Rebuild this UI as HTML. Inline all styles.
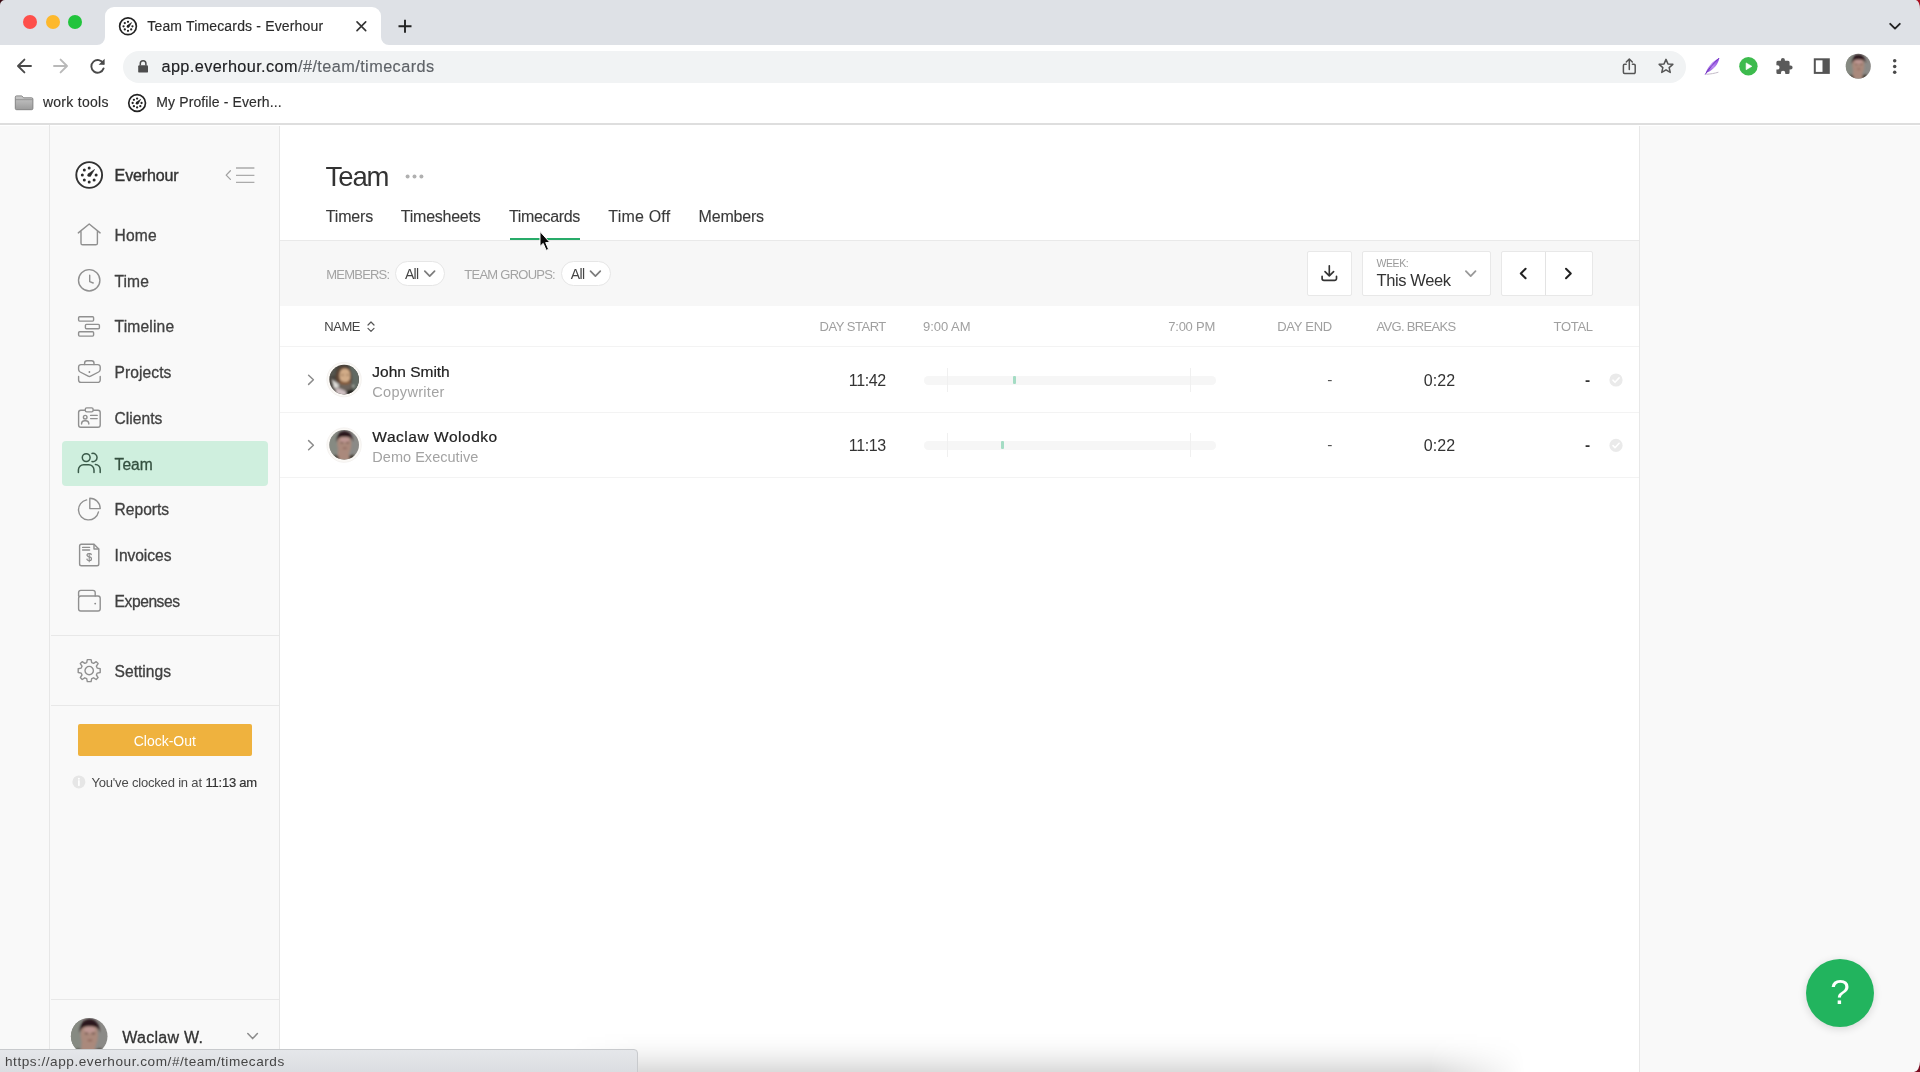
<!DOCTYPE html>
<html lang="en"><head><meta charset="utf-8"><title>Team Timecards - Everhour</title>
<style>
*{box-sizing:border-box;margin:0;padding:0}
html,body{width:1920px;height:1072px;overflow:hidden;background:#fff}
body{font-family:"Liberation Sans",sans-serif;color:#333;position:relative}
.a{position:absolute}
.t{position:absolute;white-space:pre;line-height:1}
svg{position:absolute;overflow:visible}
.ic{fill:none;stroke:#909090;stroke-width:1.4;stroke-linecap:round;stroke-linejoin:round}
#tabbar{left:0;top:0;width:1920px;height:45px;background:#dee1e6}
#tab{left:105px;top:7px;width:276px;height:38px;background:#fff;border-radius:9px 9px 0 0}
#toolbar{left:0;top:45px;width:1920px;height:79px;background:#fff}
#tbline{left:0;top:123px;width:1920px;height:2px;background:#dedede}
#pill{left:123px;top:51px;width:1563px;height:32px;border-radius:16px;background:#f1f3f4}
.dot{position:absolute;width:14px;height:14px;border-radius:50%;top:15px}
#gutl{left:0;top:126px;width:50px;height:946px;background:#f9f9f9}
#side{left:50px;top:126px;width:230px;height:946px;background:#f9f9f9;border-right:1px solid #e6e6e6}
#sidel{left:49.3px;top:125px;width:1px;height:947px;background:#e7e7e7}
#gutr{left:1639px;top:126px;width:281px;height:946px;background:#f9f9f9;border-left:1px solid #e8e8e8}
.hr{position:absolute;height:1px;background:#e8e8e8}
#active{left:62px;top:440.5px;width:206px;height:45.5px;background:#cfefde;border-radius:4px}
#clock{left:78px;top:724px;width:173.5px;height:32px;background:#efb23e;border-radius:2px}
#filter{left:280px;top:241px;width:1359px;height:64.5px;background:#f7f7f7}
.pillf{position:absolute;top:261px;height:25px;background:#fff;border:1px solid #e6e6e6;border-radius:12.5px}
.btn{position:absolute;top:251px;height:45px;background:#fff;border:1px solid #e8e8e8;border-radius:2px}
.bar{position:absolute;left:923.5px;width:292px;height:8.5px;background:#f6f6f6;border-radius:4.25px}
.tick{position:absolute;width:1px;height:24px;background:#f0f0f0}
.mark{position:absolute;width:3px;height:8px;background:#a4dcc4;border-radius:1px}
#status{left:-1px;top:1049px;width:639px;height:24px;background:linear-gradient(to bottom,#e5e7ea,#dbdde1);border:1px solid #c8cacd;border-radius:0 4px 0 0}
#shade{left:570px;top:1032px;width:960px;height:40px;background:linear-gradient(to bottom,rgba(0,0,0,0) 0,rgba(0,0,0,.012) 25%,rgba(0,0,0,.04) 50%,rgba(0,0,0,.085) 75%,rgba(0,0,0,.145) 100%);-webkit-mask-image:linear-gradient(to right,transparent 0,#000 70px,#000 860px,transparent 955px);mask-image:linear-gradient(to right,transparent 0,#000 70px,#000 860px,transparent 955px)}
#help{left:1806px;top:959px;width:68px;height:68px;border-radius:50%;background:#22b45e;box-shadow:0 2px 8px rgba(0,0,0,.14)}
</style></head><body>
<svg width="2" height="2" style="left:-10px;top:-10px"><defs>
<filter id="bl" x="-20%" y="-20%" width="140%" height="140%"><feGaussianBlur stdDeviation="1"/></filter>
<clipPath id="c15"><circle r="14.8"/></clipPath>
<g id="evl"><circle r="12.9" fill="#fff" stroke="#333" stroke-width="1.9"/><g fill="#2b2b2b"><circle cx="0" cy="-6.9" r="1.5"/><circle cx="-4.9" cy="-4.9" r="1.5"/><circle cx="-6.9" cy="0" r="1.5"/><circle cx="-4.9" cy="4.9" r="1.5"/><circle cx="0" cy="6.9" r="1.5"/><circle cx="4.9" cy="4.9" r="1.5"/><circle cx="6.9" cy="0" r="1.5"/><circle cx="-.1" cy=".2" r="1.65"/><path d="M-1.35 -.75 L5.3 -5.5 L1.2 1.35Z" stroke="#2b2b2b" stroke-width=".7" stroke-linejoin="round"/></g></g>
<g id="evs"><circle r="12.6" fill="#fff" stroke="#222" stroke-width="2.5"/><g fill="#222"><circle cx="0" cy="-6.7" r="1.7"/><circle cx="-4.8" cy="-4.8" r="1.7"/><circle cx="-6.7" cy="0" r="1.7"/><circle cx="-4.8" cy="4.8" r="1.7"/><circle cx="0" cy="6.7" r="1.7"/><circle cx="4.8" cy="4.8" r="1.7"/><circle cx="6.7" cy="0" r="1.7"/><circle cx="-.1" cy=".2" r="1.9"/><path d="M-1.5 -.8 L5.4 -5.6 L1.3 1.5Z" stroke="#222" stroke-width=".9" stroke-linejoin="round"/></g></g>
<g id="wac"><g clip-path="url(#c15)"><rect x="-16" y="-16" width="32" height="32" fill="#8b8a87"/><g filter="url(#bl)"><rect x="-16" y="-16" width="9" height="32" fill="#868a82"/><path d="M-6.6 15 L-6 4 C-7.6 -2 -7.4 -10 0 -10.6 C7.4 -10 7.8 -2 6.6 3.5 L4.6 9.5 L5 15Z" fill="#aa897b"/><ellipse cx=".4" cy="-5.2" rx="4.6" ry="2.6" fill="#bd9692"/><path d="M-7.8 -2.4 C-9.4 -17.6 9.8 -17.6 8.4 -2.8 C7.4 -6.8 5.6 -8 .4 -8 C-4.6 -8 -6.6 -6.8 -7.8 -2.4Z" fill="#2c191d"/><path d="M-3.4 -2.2 H-1 M2 -2.2 H4.6" stroke="#6b4c44" stroke-width="1.1"/><path d="M-1.2 3.4 H2.4" stroke="#8a5d55" stroke-width="1.2"/><path d="M-12 15 L-9.5 9.5 L-5.6 11.6 L-5 15Z" fill="#47423d"/><path d="M4.8 15 L5 10.8 L9.4 9.6 L11.5 15Z" fill="#463f36"/></g></g></g>
<g id="jsm"><g clip-path="url(#c15)"><rect x="-16" y="-16" width="32" height="32" fill="#45413b"/><g filter="url(#bl)"><path d="M5 -16 H16 V12 L8 12 L7 -4Z" fill="#626a63"/><path d="M-16 -2 L-9 -4 L-8 -14 L-16 -14Z" fill="#56574f"/><path d="M-7.6 3.4 C-9.6 -6 -6.6 -13.6 0 -13.4 C6.8 -13.2 8.6 -5.4 7.2 3.2Z" fill="#604636"/><path d="M-4.4 -1 C-5.4 -7 -3.4 -11 .8 -11 C5 -11 6.8 -7 5.8 -.6 C5 3.4 -3.6 3.8 -4.4 -1Z" fill="#d2ac88"/><path d="M-2.8 -4.6 H-.4 M2.4 -4.6 H4.6" stroke="#7a5a3c" stroke-width="1.2"/><path d="M-5.2 2.4 C-3 4.4 5 4.4 7.2 2.2 L7.4 9.4 C4 11 -2 11 -5 9.4Z" fill="#6c645b"/><path d="M-4.4 1.4 C-2 3.4 4 3.2 6.4 1.2 L6 4 C3 5.4 -2 5.4 -4.6 4Z" fill="#8a5d3a"/><path d="M-12.6 -.8 L-5.4 4.6 L-5.6 8.4 L-10.4 9 Z" fill="#dcdad6"/><path d="M-9.4 9.4 L-5 8.6 L2.6 12 L2 16 L-7 16Z" fill="#cfc0c2"/><path d="M2.6 11.6 L9 10 L11 16 L2 16Z" fill="#23231f"/><circle cx="9" cy="6.4" r=".9" fill="#d8d8d0"/></g></g></g>
</defs></svg>

<!-- ================= BROWSER CHROME ================= -->
<div class="a" id="tabbar"></div>
<div class="a" id="tab"></div>
<svg style="left:97px;top:37px" width="8" height="8"><path d="M0 8 A8 8 0 0 0 8 0 V8Z" fill="#fff"/></svg>
<svg style="left:381px;top:37px" width="8" height="8"><path d="M8 8 A8 8 0 0 1 0 0 V8Z" fill="#fff"/></svg>
<div class="dot" style="left:23px;background:#fe4f4b"></div>
<div class="dot" style="left:45.5px;background:#fdb82c"></div>
<div class="dot" style="left:68.3px;background:#21c43c"></div>
<div class="a" id="toolbar"></div>
<div class="a" id="tbline"></div>
<div class="a" id="pill"></div>
<!--CHROMEICONS_START-->
<svg width="1920" height="125" style="left:0;top:0" viewBox="0 0 1920 125">
<defs>
<linearGradient id="fe" x1="0" y1="1" x2="1" y2="0"><stop offset="0" stop-color="#7a38c9"/><stop offset=".5" stop-color="#b98af0"/><stop offset="1" stop-color="#8a44dc"/></linearGradient>
<linearGradient id="fold" x1="0" y1="0" x2="0" y2="1"><stop offset="0" stop-color="#c9c9c9"/><stop offset="1" stop-color="#9b9b9b"/></linearGradient>
<radialGradient id="face" cx=".5" cy=".45" r=".5"><stop offset="0" stop-color="#c9a08f"/><stop offset=".55" stop-color="#b08878"/><stop offset="1" stop-color="#8d8a86"/></radialGradient>
<clipPath id="pc"><circle cx="1858.3" cy="66.2" r="12.5"/></clipPath>
</defs>
<!-- corners of window -->
<path d="M0 0 H5 A5 5 0 0 0 0 5Z" fill="#3a0a12"/><path d="M1915.8 0 A4.2 9.2 0 0 1 1920 9.2 V0Z" fill="#a80f20"/>
<!-- tab favicon / close / plus -->
<use href="#evs" transform="translate(128 26.3) scale(.665)"/>
<path d="M357 21.9 L365.7 30.6 M365.7 21.9 L357 30.6" stroke="#333" stroke-width="1.6" stroke-linecap="round"/>
<path d="M398.5 26.3 H411.5 M405 19.8 V32.8" stroke="#222" stroke-width="1.9" stroke-linecap="butt"/>
<path d="M1890.2 23.8 L1895 28.6 L1899.8 23.8" fill="none" stroke="#222" stroke-width="1.9" stroke-linecap="round" stroke-linejoin="round"/>
<!-- nav arrows -->
<path d="M31 66 H18.2 M24.4 59.6 L18 66 L24.4 72.4" fill="none" stroke="#4a4a4a" stroke-width="1.9" stroke-linecap="round" stroke-linejoin="round"/>
<path d="M54 66 H66.8 M60.6 59.6 L67 66 L60.6 72.4" fill="none" stroke="#b9b9b9" stroke-width="1.9" stroke-linecap="round" stroke-linejoin="round"/>
<path d="M103.3 63.6 A6.3 6.3 0 1 0 103.6 68.4" fill="none" stroke="#4a4a4a" stroke-width="1.9" stroke-linecap="round"/>
<path d="M104.6 58.8 V64.8 H98.6 Z" fill="#4a4a4a"/>
<!-- lock -->
<rect x="138.2" y="65.2" width="9.8" height="7.4" rx="1.2" fill="#4d4d4d"/>
<path d="M140.3 65.5 V63.6 A2.8 2.8 0 0 1 145.9 63.6 V65.5" fill="none" stroke="#4d4d4d" stroke-width="1.5"/>
<!-- share -->
<path d="M1626.2 64.3 H1624.6 A1.2 1.2 0 0 0 1623.4 65.5 V72.3 A1.2 1.2 0 0 0 1624.6 73.5 H1634 A1.2 1.2 0 0 0 1635.2 72.3 V65.5 A1.2 1.2 0 0 0 1634 64.3 H1632.4" fill="none" stroke="#555" stroke-width="1.5" stroke-linecap="round"/>
<path d="M1629.3 69.5 V59.3 M1626.3 62 L1629.3 59 L1632.3 62" fill="none" stroke="#555" stroke-width="1.5" stroke-linecap="round" stroke-linejoin="round"/>
<!-- star -->
<path d="M1666 59.4 L1667.95 63.9 L1672.85 64.35 L1669.15 67.6 L1670.25 72.4 L1666 69.85 L1661.75 72.4 L1662.85 67.6 L1659.15 64.35 L1664.05 63.9 Z" fill="none" stroke="#555" stroke-width="1.5" stroke-linejoin="round"/>
<!-- feather -->
<path d="M1705.4 74.2 C1706.8 68.4 1711.8 61.4 1719.2 58 C1718.6 63.6 1713.8 70 1706.8 72.6 Z" fill="url(#fe)"/>
<path d="M1705.2 74.6 C1708.2 69.6 1712.6 64.4 1719.2 58" fill="none" stroke="#6f2fc0" stroke-width=".9"/>
<path d="M1706.4 74.3 C1710 74.1 1714.6 73.4 1718.4 72.2" fill="none" stroke="#c4bcc9" stroke-width="1"/>
<!-- play -->
<circle cx="1748.4" cy="66.3" r="9.2" fill="#3dbb4d"/><path d="M1746.1 62.9 V69.7 L1751.9 66.3Z" fill="#fff" stroke="#fff" stroke-width=".6" stroke-linejoin="round"/>
<!-- puzzle -->
<path d="M1790.6 65.6 H1789.6 V62.2 A1.5 1.5 0 0 0 1788.1 60.7 H1784.9 V59.9 A2 2 0 0 0 1780.9 59.9 V60.7 H1777.9 A1.5 1.5 0 0 0 1776.4 62.2 V65.2 H1777.3 A2.2 2.2 0 0 1 1777.3 69.6 H1776.4 V72.4 A1.5 1.5 0 0 0 1777.9 73.9 H1780.9 V73 A2.2 2.2 0 0 1 1785.3 73 V73.9 H1788.1 A1.5 1.5 0 0 0 1789.6 72.4 V69.6 H1790.6 A2 2 0 0 0 1790.6 65.6Z" fill="#5a5a5a"/>
<!-- side panel -->
<rect x="1814.8" y="59.3" width="14" height="13.6" fill="none" stroke="#555" stroke-width="2"/><rect x="1822.5" y="59.3" width="6.3" height="13.6" fill="#555"/>
<!-- profile -->
<use href="#wac" transform="translate(1858.3 66.2) scale(.845)"/>
<!-- dots menu -->
<circle cx="1894.7" cy="60.8" r="1.75" fill="#4a4a4a"/><circle cx="1894.7" cy="66.5" r="1.75" fill="#4a4a4a"/><circle cx="1894.7" cy="72.2" r="1.75" fill="#4a4a4a"/>
<!-- bookmarks -->
<path d="M15.3 97.2 A1.3 1.3 0 0 1 16.6 95.9 H21.8 L23.6 97.8 H31.6 A1.3 1.3 0 0 1 32.9 99.1 V108.4 A1.3 1.3 0 0 1 31.6 109.7 H16.6 A1.3 1.3 0 0 1 15.3 108.4Z" fill="url(#fold)" stroke="#7d7d7d" stroke-width=".9"/>
<path d="M15.6 99.7 H32.6" stroke="#8a8a8a" stroke-width=".8"/>
<use href="#evs" transform="translate(137.1 103) scale(.665)"/>
</svg>
<!--CHROMEICONS_END-->
<!-- ================= APP ================= -->
<div class="a" id="gutl"></div>
<div class="a" id="side"></div>
<div class="a" id="sidel"></div>
<div class="a" id="gutr"></div>
<div class="a" id="active"></div>
<div class="hr" style="left:51px;top:635px;width:228px"></div>
<div class="hr" style="left:51px;top:705px;width:228px"></div>
<div class="hr" style="left:51px;top:999px;width:228px"></div>
<div class="a" id="clock"></div>
<!--SIDEICONS_START-->
<svg width="280" height="947" style="left:0;top:125px" viewBox="0 125 280 947">
<defs><clipPath id="uc"><circle cx="89.2" cy="1036.2" r="18.3"/></clipPath><filter id="b1"><feGaussianBlur stdDeviation="1.1"/></filter></defs>
<!-- logo -->
<use href="#evl" transform="translate(89.2 175)"/>
<!-- collapse -->
<path d="M230.4 170.8 L226.2 175.1 L230.4 179.4" fill="none" stroke="#a2a2a2" stroke-width="1.3" stroke-linecap="round" stroke-linejoin="round"/>
<path d="M236 168 H254.4 M236 175.3 H254.4 M236 182.4 H254.4" stroke="#ababab" stroke-width="1.3"/>
<!-- home -->
<path class="ic" d="M78.3 232.9 L89.2 224 L100.1 232.9 M81 231 V243.2 A1.6 1.6 0 0 0 82.6 244.8 H95.8 A1.6 1.6 0 0 0 97.4 243.2 V231"/>
<!-- time -->
<circle class="ic" cx="89.2" cy="280.3" r="10.7"/><path class="ic" d="M89.7 275.2 V281.6 L93.2 283"/>
<!-- timeline -->
<rect class="ic" x="78.6" y="316.8" width="15" height="4.3" rx="1"/><rect class="ic" x="85.4" y="324.4" width="14" height="4.3" rx="1"/><rect class="ic" x="78.6" y="331.8" width="15" height="4.3" rx="1"/>
<!-- projects -->
<path class="ic" d="M84.6 364.6 V363.2 A2.4 2.4 0 0 1 87 360.8 H91.6 A2.4 2.4 0 0 1 94 363.2 V364.6"/>
<path class="ic" d="M78.6 369.6 V367 A2.4 2.4 0 0 1 81 364.6 H97.8 A2.4 2.4 0 0 1 100.2 367 V369.6 C100.2 370.8 99.6 371.4 98.6 372 L90.6 376.2 C89.8 376.6 89 376.6 88.2 376.2 L80.2 372 C79.2 371.4 78.6 370.8 78.6 369.6Z"/>
<path class="ic" d="M78.6 376.4 V380 A2.4 2.4 0 0 0 81 382.4 H97.8 A2.4 2.4 0 0 0 100.2 380 V376.4"/>
<circle cx="89.4" cy="372" r=".9" fill="#8a8a8a"/>
<!-- clients -->
<rect class="ic" x="78.6" y="410.2" width="21.6" height="17" rx="2.2"/><rect class="ic" x="85.3" y="407.9" width="7.8" height="4" rx="1.4" style="fill:#f9f9f9"/>
<circle class="ic" cx="85.2" cy="417.2" r="1.8"/><path class="ic" d="M81.6 424 V423.4 A3 3 0 0 1 84.6 420.8 H85.8 A3 3 0 0 1 88.8 423.4 V424"/><path class="ic" d="M90.6 415.4 H97.2 M90.6 418.6 H97.2"/>
<!-- team (active) -->
<g fill="none" stroke="#3a5a49" stroke-width="1.5" stroke-linecap="round" stroke-linejoin="round"><circle cx="86.2" cy="457.6" r="3.9"/><path d="M78.4 472.6 V470 A5.2 5.2 0 0 1 83.6 464.8 H88.8 A5.2 5.2 0 0 1 94 470 V472.6"/><path d="M92 453.45 A4.15 4.15 0 1 1 92 461.55"/><path d="M95.4 464.5 A5.1 5.1 0 0 1 100.2 469.6 V472.6"/></g>
<!-- reports -->
<path class="ic" d="M86.6 499.9 A10.1 10.1 0 1 0 98.5 511.9"/><path class="ic" d="M89.8 498.2 A10.4 10.4 0 0 1 100.2 508.6 H89.8Z"/>
<!-- invoices -->
<path class="ic" d="M79.6 546 A1.8 1.8 0 0 1 81.4 544.2 H94 L98.8 549 V564 A1.8 1.8 0 0 1 97 565.8 H81.4 A1.8 1.8 0 0 1 79.6 564Z"/><path class="ic" d="M94 544.4 V549 H98.6"/><path class="ic" d="M82.6 547.4 H89.6 M82.6 550 H89.6"/>
<!--$ glyph drawn as text below-->
<!-- expenses -->
<path class="ic" d="M78.6 596 V592.6 A2.2 2.2 0 0 1 80.8 590.4 H93 A2.2 2.2 0 0 1 95.2 592.6 V596"/><rect class="ic" x="78.6" y="596" width="21.6" height="15" rx="2.2"/><circle cx="95.2" cy="603.6" r=".95" fill="#8a8a8a"/>
<!-- settings gear -->
<g transform="translate(89.2 670.6)"><path class="ic" d="M-1.9 -11 H1.9 L2.5 -8 L4.4 -7.2 L7 -8.9 L8.9 -7 L7.2 -4.4 L8 -2.5 L11 -1.9 V1.9 L8 2.5 L7.2 4.4 L8.9 7 L7 8.9 L4.4 7.2 L2.5 8 L1.9 11 H-1.9 L-2.5 8 L-4.4 7.2 L-7 8.9 L-8.9 7 L-7.2 4.4 L-8 2.5 L-11 1.9 V-1.9 L-8 -2.5 L-7.2 -4.4 L-8.9 -7 L-7 -8.9 L-4.4 -7.2 L-2.5 -8Z"/><circle class="ic" r="4.2"/></g>
<!-- info -->
<circle cx="78.9" cy="781.9" r="6.5" fill="#e6e6e6"/><circle cx="78.9" cy="778.8" r="1" fill="#fff"/><path d="M78.9 780.8 V785.2" stroke="#fff" stroke-width="1.7" stroke-linecap="round"/>
<!-- user avatar -->
<use href="#wac" transform="translate(89.2 1036.2) scale(1.237)"/>
<path d="M247.8 1033.6 L252.6 1038.6 L257.4 1033.6" fill="none" stroke="#8c8c8c" stroke-width="1.5" stroke-linecap="round" stroke-linejoin="round"/>
</svg>
<!--SIDEICONS_END-->
<!-- main -->
<div class="hr" style="left:280px;top:240px;width:1359px;background:#e9e9e9"></div>
<div class="a" id="filter"></div>
<div class="a" style="left:509.5px;top:237.5px;width:70.5px;height:2.5px;background:#28ab69"></div>
<div class="pillf" style="left:395px;width:50px"></div>
<div class="pillf" style="left:561px;width:50px"></div>
<div class="btn" style="left:1307px;width:45px"></div>
<div class="btn" style="left:1361.5px;width:129px"></div>
<div class="btn" style="left:1500.5px;width:92.5px"></div>
<div class="a" style="left:1545px;top:252px;width:1px;height:43px;background:#e3e3e3"></div>
<div class="hr" style="left:280px;top:346px;width:1359px;background:#f3f3f3"></div>
<div class="hr" style="left:280px;top:412px;width:1359px;background:#f3f3f3"></div>
<div class="hr" style="left:280px;top:477px;width:1359px;background:#f3f3f3"></div>
<div class="bar" style="top:376px"></div><div class="tick" style="left:946.5px;top:367.5px"></div><div class="tick" style="left:1189.5px;top:367.5px"></div><div class="mark" style="left:1013px;top:376px"></div>
<div class="bar" style="top:441px"></div><div class="tick" style="left:946.5px;top:433px"></div><div class="tick" style="left:1189.5px;top:433px"></div><div class="mark" style="left:1001px;top:441px"></div>
<!--MAINICONS_START-->
<svg width="1360" height="400" style="left:280px;top:125px" viewBox="280 125 1360 400">
<defs>
<clipPath id="a1"><circle cx="344.1" cy="379.6" r="14.8"/></clipPath><clipPath id="a2"><circle cx="344.1" cy="445.1" r="14.8"/></clipPath>
<filter id="b2"><feGaussianBlur stdDeviation=".9"/></filter>
<g id="chk"><circle r="6.6" fill="#eaeaea"/><path d="M-3 .2 L-1 2.3 L3.1 -2.1" fill="none" stroke="#fff" stroke-width="1.6" stroke-linecap="round" stroke-linejoin="round"/></g>
</defs>
<!-- title dots -->
<circle cx="407.6" cy="176.4" r="2" fill="#b0b0b0"/><circle cx="414.5" cy="176.4" r="2" fill="#b0b0b0"/><circle cx="421.4" cy="176.4" r="2" fill="#b0b0b0"/>
<!-- pill chevrons -->
<path d="M424.8 271.2 L429.7 276.2 L434.6 271.2" fill="none" stroke="#7c7c7c" stroke-width="1.7" stroke-linecap="round" stroke-linejoin="round"/>
<path d="M590.5 271.2 L595.4 276.2 L600.3 271.2" fill="none" stroke="#7c7c7c" stroke-width="1.7" stroke-linecap="round" stroke-linejoin="round"/>
<!-- sort -->
<path d="M368 325 L371 322 L374 325 M368 328.4 L371 331.4 L374 328.4" fill="none" stroke="#555" stroke-width="1.2" stroke-linecap="round" stroke-linejoin="round"/>
<!-- download -->
<path d="M1329.3 265.7 V275.6 M1325 271.6 L1329.3 275.9 L1333.6 271.6" fill="none" stroke="#333" stroke-width="1.65" stroke-linecap="round" stroke-linejoin="round"/>
<path d="M1322.1 276.2 V278.5 A1.9 1.9 0 0 0 1324 280.4 H1334.6 A1.9 1.9 0 0 0 1336.5 278.5 V276.2" fill="none" stroke="#333" stroke-width="1.65" stroke-linecap="round" stroke-linejoin="round"/>
<!-- week chevron -->
<path d="M1465.9 271.2 L1470.7 276.1 L1475.5 271.2" fill="none" stroke="#999" stroke-width="1.8" stroke-linecap="round" stroke-linejoin="round"/>
<!-- prev/next -->
<path d="M1525.6 268.8 L1520.8 273.5 L1525.6 278.2" fill="none" stroke="#222" stroke-width="2" stroke-linecap="round" stroke-linejoin="round"/>
<path d="M1566 268.8 L1570.8 273.5 L1566 278.2" fill="none" stroke="#222" stroke-width="2" stroke-linecap="round" stroke-linejoin="round"/>
<!-- row chevrons -->
<path d="M308.6 375.2 L313.4 379.8 L308.6 384.4" fill="none" stroke="#8c8c8c" stroke-width="1.5" stroke-linecap="round" stroke-linejoin="round"/>
<path d="M308.6 440.6 L313.4 445.2 L308.6 449.8" fill="none" stroke="#8c8c8c" stroke-width="1.5" stroke-linecap="round" stroke-linejoin="round"/>
<!-- avatar 1 -->
<circle cx="344.1" cy="379.6" r="17.2" fill="#fbf9f6" stroke="#f1efec" stroke-width=".8"/>
<use href="#jsm" transform="translate(344.15 379.6)"/>
<!-- avatar 2 -->
<circle cx="344.1" cy="445.1" r="17.2" fill="#fbf9f6" stroke="#f1efec" stroke-width=".8"/>
<use href="#wac" transform="translate(344.2 444.85)"/>
<!-- checks -->
<use href="#chk" x="1616" y="380"/><use href="#chk" x="1616" y="445.4"/>
</svg>
<!--MAINICONS_END-->
<div class="a" id="shade"></div>
<div class="a" id="status"></div>
<div class="a" id="help"></div>
<svg width="8" height="12" style="left:1912px;top:1060px"><path d="M8 12 H2 A6 10.4 0 0 0 8 1.6Z" fill="#7a0b20"/></svg>
<!-- ================= TEXT ================= -->
<div id="txt" style="position:absolute;left:0;top:0;width:1920px;height:1072px;will-change:opacity;opacity:.999">
<span class="t" style="left:147.3px;top:18.9px;font-size:14px;color:#2b2b2b;letter-spacing:0.16px;-webkit-text-stroke:0.15px #2b2b2b;">Team Timecards - Everhour</span>
<span class="t" style="left:161.5px;top:58.2px;font-size:16.3px;color:#202124;letter-spacing:0.38px;-webkit-text-stroke:0.15px #202124;">app.everhour.com</span>
<span class="t" style="left:298.0px;top:58.2px;font-size:16.3px;color:#5f6368;letter-spacing:0.42px;-webkit-text-stroke:0.15px #5f6368;">/#/team/timecards</span>
<span class="t" style="left:42.9px;top:95.1px;font-size:14px;color:#2e2e2e;letter-spacing:0.28px;-webkit-text-stroke:0.15px #2e2e2e;">work tools</span>
<span class="t" style="left:156.3px;top:95.1px;font-size:14px;color:#2e2e2e;letter-spacing:0.12px;-webkit-text-stroke:0.15px #2e2e2e;">My Profile - Everh...</span>
<span class="t" style="left:5.0px;top:1055.1px;font-size:13.6px;color:#454545;letter-spacing:0.54px;">https://app.everhour.com/#/team/timecards</span>
<span class="t" style="left:114.6px;top:167.8px;font-size:16px;color:#333;letter-spacing:-0.14px;-webkit-text-stroke:0.4px #333;">Everhour</span>
<span class="t" style="left:114.6px;top:228.1px;font-size:15.6px;color:#404040;letter-spacing:0.15px;-webkit-text-stroke:0.3px #404040;">Home</span>
<span class="t" style="left:114.6px;top:273.7px;font-size:15.6px;color:#404040;letter-spacing:0.06px;-webkit-text-stroke:0.3px #404040;">Time</span>
<span class="t" style="left:114.6px;top:319.3px;font-size:15.6px;color:#404040;letter-spacing:0.17px;-webkit-text-stroke:0.3px #404040;">Timeline</span>
<span class="t" style="left:114.6px;top:365.0px;font-size:15.6px;color:#404040;letter-spacing:0.06px;-webkit-text-stroke:0.3px #404040;">Projects</span>
<span class="t" style="left:114.6px;top:411.1px;font-size:15.6px;color:#404040;-webkit-text-stroke:0.3px #404040;">Clients</span>
<span class="t" style="left:114.6px;top:456.7px;font-size:15.6px;color:#34503f;letter-spacing:-0.01px;-webkit-text-stroke:0.3px #34503f;">Team</span>
<span class="t" style="left:114.6px;top:502.2px;font-size:15.6px;color:#404040;letter-spacing:-0.02px;-webkit-text-stroke:0.3px #404040;">Reports</span>
<span class="t" style="left:114.6px;top:548.2px;font-size:15.6px;color:#404040;letter-spacing:-0.05px;-webkit-text-stroke:0.3px #404040;">Invoices</span>
<span class="t" style="left:114.6px;top:594.1px;font-size:15.6px;color:#404040;letter-spacing:-0.44px;-webkit-text-stroke:0.3px #404040;">Expenses</span>
<span class="t" style="left:114.6px;top:664.0px;font-size:15.6px;color:#404040;letter-spacing:0.01px;-webkit-text-stroke:0.3px #404040;">Settings</span>
<span class="t" style="left:133.7px;top:733.5px;font-size:14px;color:#fff;">Clock-Out</span>
<span class="t" style="left:91.4px;top:775.6px;font-size:13px;color:#4a4a4a;letter-spacing:-0.18px;">You&#x27;ve clocked in at</span>
<span class="t" style="left:205.5px;top:775.6px;font-size:13px;color:#333;letter-spacing:-0.22px;-webkit-text-stroke:0.2px #333;">11:13 am</span>
<span class="t" style="left:122.3px;top:1029.8px;font-size:16px;color:#333;letter-spacing:0.27px;-webkit-text-stroke:0.3px #333;">Waclaw W.</span>
<span class="t" style="left:325.6px;top:163.0px;font-size:27.5px;color:#333;letter-spacing:-1.11px;">Team</span>
<span class="t" style="left:325.8px;top:208.7px;font-size:16px;color:#3a3a3a;letter-spacing:-0.18px;-webkit-text-stroke:0.12px #3a3a3a;">Timers</span>
<span class="t" style="left:400.8px;top:208.7px;font-size:16px;color:#3a3a3a;letter-spacing:-0.24px;-webkit-text-stroke:0.12px #3a3a3a;">Timesheets</span>
<span class="t" style="left:509.0px;top:208.7px;font-size:16px;color:#3a3a3a;letter-spacing:-0.34px;-webkit-text-stroke:0.12px #3a3a3a;">Timecards</span>
<span class="t" style="left:608.3px;top:208.7px;font-size:16px;color:#3a3a3a;letter-spacing:0.19px;-webkit-text-stroke:0.12px #3a3a3a;">Time Off</span>
<span class="t" style="left:698.6px;top:208.7px;font-size:16px;color:#3a3a3a;letter-spacing:-0.21px;-webkit-text-stroke:0.12px #3a3a3a;">Members</span>
<span class="t" style="left:326.3px;top:267.8px;font-size:13px;color:#a3a3a3;letter-spacing:-0.79px;">MEMBERS:</span>
<span class="t" style="left:405.0px;top:267.0px;font-size:14px;color:#444;letter-spacing:-0.75px;">All</span>
<span class="t" style="left:464.3px;top:267.8px;font-size:13px;color:#a3a3a3;letter-spacing:-0.75px;">TEAM GROUPS:</span>
<span class="t" style="left:570.8px;top:267.0px;font-size:14px;color:#444;letter-spacing:-0.62px;">All</span>
<span class="t" style="left:1376.6px;top:257.8px;font-size:10.5px;color:#9a9a9a;letter-spacing:-0.45px;">WEEK:</span>
<span class="t" style="left:1376.6px;top:271.5px;font-size:16.5px;color:#333;letter-spacing:-0.40px;">This Week</span>
<span class="t" style="left:324.3px;top:320.4px;font-size:13px;color:#444;letter-spacing:-0.47px;">NAME</span>
<span class="t" style="left:819.5px;top:320.4px;font-size:13px;color:#a0a0a0;letter-spacing:-0.47px;">DAY START</span>
<span class="t" style="left:923.0px;top:320.4px;font-size:13px;color:#a0a0a0;letter-spacing:-0.03px;">9:00 AM</span>
<span class="t" style="left:1168.3px;top:320.4px;font-size:13px;color:#a0a0a0;letter-spacing:-0.25px;">7:00 PM</span>
<span class="t" style="left:1277.2px;top:320.4px;font-size:13px;color:#a0a0a0;letter-spacing:-0.26px;">DAY END</span>
<span class="t" style="left:1376.6px;top:320.4px;font-size:13px;color:#a0a0a0;letter-spacing:-0.70px;">AVG. BREAKS</span>
<span class="t" style="left:1553.5px;top:320.4px;font-size:13px;color:#a0a0a0;letter-spacing:-0.30px;">TOTAL</span>
<span class="t" style="left:372.3px;top:363.6px;font-size:15.5px;color:#222;letter-spacing:-0.01px;-webkit-text-stroke:0.22px #222;">John Smith</span>
<span class="t" style="left:372.3px;top:384.8px;font-size:14.5px;color:#a3a3a3;letter-spacing:0.31px;">Copywriter</span>
<span class="t" style="left:372.3px;top:428.8px;font-size:15.5px;color:#222;letter-spacing:0.53px;-webkit-text-stroke:0.22px #222;">Waclaw Wolodko</span>
<span class="t" style="left:372.3px;top:449.9px;font-size:14.5px;color:#a3a3a3;letter-spacing:0.03px;">Demo Executive</span>
<span class="t" style="left:848.8px;top:372.6px;font-size:16px;color:#333;letter-spacing:-0.37px;">11:42</span>
<span class="t" style="left:1327.2px;top:372.1px;font-size:15.5px;color:#555;letter-spacing:-0.47px;">-</span>
<span class="t" style="left:1423.8px;top:372.6px;font-size:16px;color:#333;letter-spacing:0.09px;">0:22</span>
<span class="t" style="left:1585.0px;top:372.1px;font-size:15.5px;color:#333;letter-spacing:0.03px;font-weight:700;">-</span>
<span class="t" style="left:848.8px;top:437.9px;font-size:16px;color:#333;letter-spacing:-0.37px;">11:13</span>
<span class="t" style="left:1327.2px;top:437.4px;font-size:15.5px;color:#555;letter-spacing:-0.47px;">-</span>
<span class="t" style="left:1423.8px;top:437.9px;font-size:16px;color:#333;letter-spacing:0.09px;">0:22</span>
<span class="t" style="left:1585.0px;top:437.4px;font-size:15.5px;color:#333;letter-spacing:0.03px;font-weight:700;">-</span>
<span class="t" style="left:1830.2px;top:974.4px;font-size:35px;color:#fff;letter-spacing:0.03px;">?</span>
<span class="t" style="left:86.3px;top:552.4px;font-size:10.5px;color:#868686;letter-spacing:0.36px;-webkit-text-stroke:0.25px #868686;">$</span>
</div>
<!--CURSOR_START-->
<svg width="16" height="24" style="left:538.1px;top:229.8px" viewBox="0 0 16 24"><path d="M2 1.5 V16.4 L5.2 13.4 L8.2 20.4 L10.6 19.3 L7.7 12.6 H12 Z" fill="#0a0a0a" stroke="#fff" stroke-width="1" stroke-linejoin="round"/></svg>
<!--CURSOR_END-->
</body></html>
